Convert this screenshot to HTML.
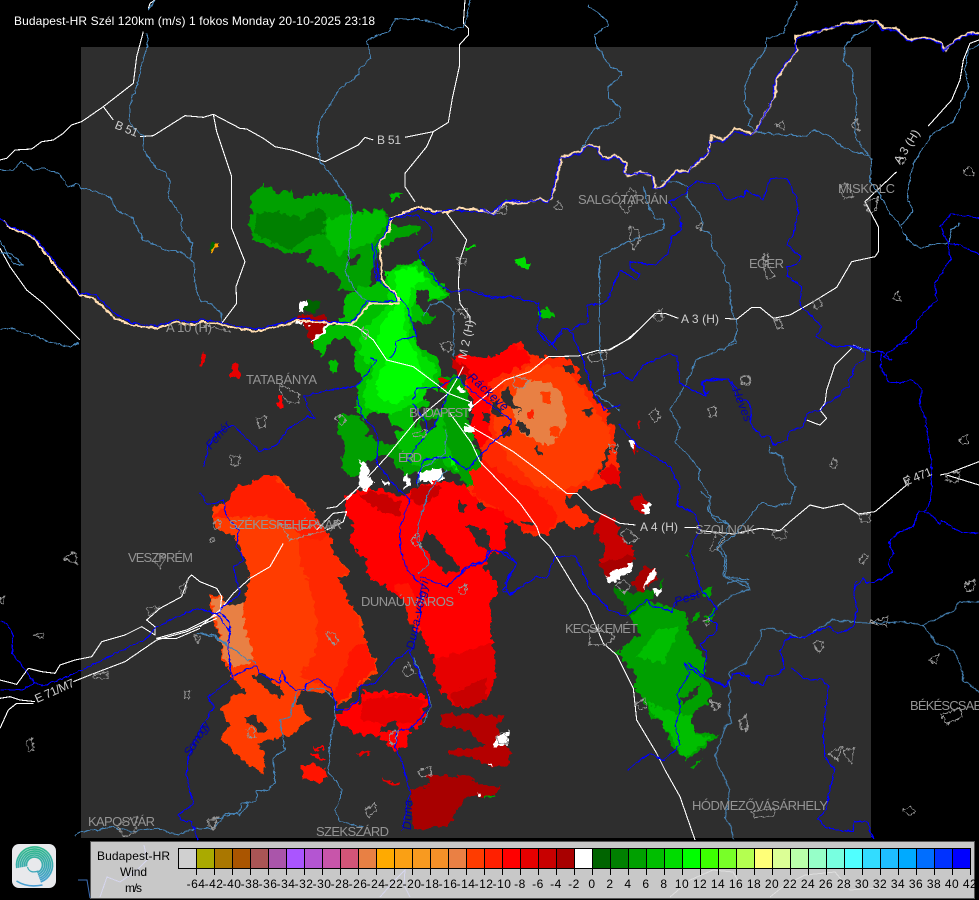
<!DOCTYPE html>
<html><head><meta charset="utf-8"><style>
html,body{margin:0;padding:0;background:#000}
svg{display:block;font-family:"Liberation Sans",sans-serif}
svg *{vector-effect:non-scaling-stroke}
.w,.s,.b,.g,.y{fill:none;stroke-linejoin:round}
.w{stroke:#fff;stroke-width:1.1}
.s{stroke:#4682b4;stroke-width:1.1}
.b{stroke:#0000ff;stroke-width:1.1}
.g{stroke:#959595;stroke-width:1}
.y{stroke:#ffdcb0;stroke-width:2}
.c{fill:#949494;font-size:13px}
.r{fill:#cfcfcf;font-size:12px}
.v{fill:#0000a8;font-size:12px;font-style:italic}
.l{fill:#000;font-size:12px;letter-spacing:.5px;text-anchor:middle}
</style></head><body>
<svg width="979" height="900" viewBox="0 0 979 900" xmlns="http://www.w3.org/2000/svg">
<defs>
<filter id="jr" filterUnits="userSpaceOnUse" x="0" y="0" width="979" height="900" color-interpolation-filters="sRGB">
<feTurbulence type="fractalNoise" baseFrequency=".16" numOctaves="2" seed="4" result="n"/>
<feDisplacementMap in="SourceGraphic" in2="n" scale="9" xChannelSelector="R" yChannelSelector="G"/>
</filter>
<filter id="jl" filterUnits="userSpaceOnUse" x="0" y="0" width="979" height="900" color-interpolation-filters="sRGB">
<feTurbulence type="fractalNoise" baseFrequency=".18" numOctaves="2" seed="9" result="n"/>
<feDisplacementMap in="SourceGraphic" in2="n" scale="4" xChannelSelector="R" yChannelSelector="G"/>
</filter>
<filter id="jc" filterUnits="userSpaceOnUse" x="0" y="0" width="979" height="900" color-interpolation-filters="sRGB">
<feTurbulence type="fractalNoise" baseFrequency=".3" numOctaves="2" seed="2" result="n"/>
<feDisplacementMap in="SourceGraphic" in2="n" scale="5" xChannelSelector="R" yChannelSelector="G"/>
</filter>
<linearGradient id="lg" gradientUnits="userSpaceOnUse" x1="30" y1="848" x2="34" y2="884"><stop offset="0" stop-color="#2fb78c"/><stop offset="1" stop-color="#4a9fd6"/></linearGradient>
</defs>
<rect width="979" height="900" fill="#000"/>
<rect x="81" y="47" width="790" height="791" fill="#2e2e2e"/>

<g filter="url(#jr)">
<!-- RADAR: north-west green (zoom3 space) -->
<g transform="translate(200,170) scale(.33333)" shape-rendering="crispEdges">
<polygon fill="#00a000" points="150,80 190,45 235,70 275,65 285,85 350,70 410,75 445,90 460,130 550,115 565,145 590,170 660,170 655,190 590,205 560,225 530,250 520,290 510,350 475,355 445,360 420,355 420,320 380,300 320,275 335,240 265,250 205,225 160,210 145,165 155,125"/>
<polygon fill="#008000" points="170,130 220,125 310,145 345,115 380,130 370,190 330,200 270,240 210,215 160,190"/>
<polygon fill="#00be00" points="380,150 460,130 550,120 560,150 540,190 510,220 440,240 410,255 380,200"/>
<polygon fill="#2e2e2e" points="445,265 475,255 478,275 450,288"/>
<polygon fill="#00be00" points="550,330 590,290 640,280 655,260 680,285 720,340 750,370 745,385 700,390 670,395 645,360 640,385 660,410 680,435 710,440 680,465 640,450 640,480 650,530 680,545 720,570 725,620 715,650 700,690 680,710 640,720 640,770 610,780 570,760 560,735 515,725 490,750 470,720 470,650 490,620 455,590 470,540 440,500 400,510 385,530 365,560 340,520 370,470 400,465 430,440 435,380 475,350 510,350"/>
<polygon fill="#00e000" points="560,310 640,285 700,340 740,375 690,385 650,370 630,440 630,490 670,560 710,590 690,680 620,710 570,740 500,710 490,660 520,600 480,550 480,500 510,460 570,400"/>
<polygon fill="#00ff00" points="590,305 640,290 680,330 640,345 620,400 610,470 650,560 680,620 650,670 580,700 530,680 530,620 560,570 530,520 540,470 590,400"/>
<polygon fill="#00a000" points="415,735 470,730 510,780 500,800 540,810 570,830 640,770 700,700 750,630 775,680 780,720 820,780 820,870 840,930 845,970 810,965 775,915 730,895 700,900 640,905 620,920 590,885 560,850 500,870 470,920 430,910 425,870 440,830 415,790"/>
<polygon fill="#00be00" points="580,790 640,770 690,760 740,710 760,760 790,820 800,890 770,905 720,870 660,890 620,870 600,840"/>
<polygon fill="#00ff00" points="745,860 790,845 785,905 760,890"/>
<polygon fill="#2e2e2e" points="645,360 680,358 685,395 650,398"/>
<polygon fill="#2e2e2e" points="505,730 545,728 560,760 555,785 520,770"/>
<polygon fill="#2e2e2e" points="680,655 710,660 700,700 670,700"/>
<polygon fill="#00be00" points="385,570 410,565 415,590 400,610 388,600"/>
<polygon fill="#00c000" points="565,75 605,65 605,85 575,92"/>
<polygon fill="#00dc00" points="800,230 830,225 815,238 802,240"/>
<polygon fill="#00a000" points="660,440 710,435 690,462 665,462"/>
<polygon fill="#00e000" points="945,270 960,268 960,285 948,285"/>
<!-- gyor piece -->
<polygon fill="#006400" points="320,395 360,395 365,415 340,430 315,420"/>
<polygon fill="#fff" points="295,390 320,390 315,430 295,425"/>
<polygon fill="#a80000" points="298,438 355,435 392,450 350,500 340,525 330,515 315,465 285,455"/>
<polygon fill="#fff" points="395,450 405,452 345,515 332,518"/>
<polygon fill="#fff" points="290,455 385,452 385,458 290,462"/>
<!-- small reds -->
<polygon fill="#e60000" points="90,610 100,580 120,580 118,625 90,622"/>
<polygon fill="#ff0000" points="235,675 250,672 252,715 232,715"/>
<polygon fill="#e60000" points="0,590 12,545 20,550 5,595"/>
<polygon fill="#006400" points="25,228 40,212 50,222 35,245"/>
<polygon fill="#ffa000" points="32,243 52,218 56,220 38,246"/>
</g>

<!-- RADAR: big left orange + centre red (zoom4 space) -->
<g transform="translate(200,460) scale(.33333)" shape-rendering="crispEdges">
<polygon fill="#ff3c00" points="100,85 210,45 245,60 280,100 320,130 340,160 390,230 385,250 410,290 445,330 440,350 415,350 455,440 485,480 500,550 530,610 530,640 500,660 470,680 455,710 410,740 400,700 360,695 320,690 300,700 290,720 340,770 300,800 270,830 240,830 200,840 175,850 200,910 190,940 130,900 60,835 90,800 60,745 100,710 140,700 90,640 70,600 65,550 30,440 30,410 60,410 85,435 130,430 155,350 130,290 105,230 40,200 40,140 80,130"/>
<polygon fill="#ff2800" points="290,180 340,160 390,230 410,290 445,340 415,350 455,440 500,550 530,620 470,680 410,735 400,695 300,650 350,570 350,450 300,300"/>
<polygon fill="#ff1e00" points="100,85 210,45 280,100 330,150 390,230 330,240 280,210 200,170 100,170 40,175 80,130"/>
<polygon fill="#ff1400" points="455,560 500,550 530,620 470,680 410,735 400,695 430,640"/>
<polygon fill="#e88044" points="30,415 60,415 85,435 130,430 130,490 165,600 100,625 75,600 60,520"/>
<polygon fill="#2e2e2e" points="160,650 185,635 250,690 240,715 210,695"/>
<polygon fill="#2e2e2e" points="310,725 330,745 358,785 345,785 305,750"/>
<polygon fill="#2e2e2e" points="130,770 165,765 200,805 190,820 150,795"/>
<polygon fill="#ff0000" points="440,105 470,100 490,80 550,90 610,110 640,90 700,60 770,70 830,90 840,150 920,130 960,140 960,200 915,200 915,270 880,280 850,320 890,370 895,400 870,420 880,550 890,640 860,720 820,740 760,740 710,670 700,590 660,520 650,500 625,480 615,430 580,395 510,355 495,300 450,250 460,200 440,160"/>
<polygon fill="#ff1400" points="580,370 630,370 650,430 660,520 625,480 615,430"/>
<polygon fill="#c80000" points="480,110 520,90 600,130 605,170 550,160"/>
<polygon fill="#c80000" points="630,90 700,70 730,90 680,130 640,135"/>
<polygon fill="#e60000" points="700,600 880,550 890,640 860,720 820,740 760,740 710,670"/>
<polygon fill="#c80000" points="750,700 860,650 860,720 820,740 765,738"/>
<polygon fill="#2e2e2e" points="800,195 860,210 880,280 840,260"/>
<polygon fill="#2e2e2e" points="680,210 720,250 785,330 740,340 690,290 660,250"/>
<polygon fill="#2e2e2e" points="915,190 960,185 960,235 925,250"/>
<polygon fill="#ff0000" points="405,770 480,720 490,695 560,695 675,705 680,740 660,800 630,810 620,860 580,870 540,830 470,820 420,800"/>
<polygon fill="#e60000" points="490,720 620,705 670,720 660,790 610,790 540,790 480,780"/>
<polygon fill="#2e2e2e" points="540,800 590,780 590,810 565,815 540,815"/>
<polygon fill="#2e2e2e" points="455,708 480,700 485,725 465,730"/>
<polygon fill="#b40000" points="720,770 750,760 915,770 890,800 930,880 930,915 870,920 800,890 745,885 745,870 860,860 820,830 810,810 720,800"/>
<polygon fill="#a80000" points="680,945 820,950 825,970 900,980 885,1005 800,1010 740,1100 640,1110 630,990 690,975"/>
<polygon fill="#ff1400" points="300,920 340,910 385,930 385,955 350,970 310,950"/>
<polygon fill="#ff0000" points="335,855 375,870 370,875 340,862"/>
<polygon fill="#ff0000" points="330,875 380,895 375,900 330,885"/>
<polygon fill="#e60000" points="545,958 600,968 595,977 548,966"/>
<polygon fill="#e60000" points="470,878 510,878 508,888 480,885"/>
<!-- green lower tail over red + white speckle -->
<polygon fill="#00a000" points="765,0 830,0 845,60 845,100 810,95 780,50"/>
<polygon fill="#fff" points="830,60 845,70 843,100 832,100"/>
<polygon fill="#fff" points="480,5 505,10 505,45 520,65 500,90 470,75"/>
<polygon fill="#fff" points="650,35 725,25 730,55 700,65 660,65"/>
<polygon fill="#fff" points="620,35 635,70 610,90"/>
<polygon fill="#fff" points="545,50 565,75 555,80"/>
<polygon fill="#fff" points="880,830 925,815 925,855 880,858"/>
<polygon fill="#fff" points="865,912 882,912 882,916 865,916"/>
<polygon fill="#fff" points="830,1000 840,1000 840,1006 830,1006"/>
<polygon fill="#00a000" points="850,1007 882,1007 882,1011 850,1011"/>
</g>

<!-- RADAR: east red disc, SE tail (zoom5 space) -->
<g transform="translate(450,330) scale(.33333)" shape-rendering="crispEdges">
<polygon fill="#ff2800" points="190,40 220,50 235,70 280,80 350,85 390,120 385,150 420,180 440,215 470,240 500,300 495,360 515,470 470,460 440,480 400,470 360,500 380,530 430,570 370,600 340,570 290,610 250,620 215,600 200,570 150,540 100,530 75,500 50,470 95,465 85,430 60,420 100,390 90,350 60,300 70,220 50,170 45,130 10,80 50,70 80,85 150,75 190,65"/>
<polygon fill="#ff3c00" points="160,150 240,110 340,110 390,170 430,230 480,300 480,370 430,440 350,480 260,470 180,390 130,310 140,220"/>
<polygon fill="#ff0000" points="190,40 220,50 235,70 240,100 160,130 100,165 45,135 10,80 50,70 80,85 150,75"/>
<polygon fill="#ff0000" points="45,135 120,160 120,320 90,350 60,300 70,220"/>
<polygon fill="#ff1400" points="60,420 100,390 170,440 260,480 330,560 290,610 215,600 150,540 75,500"/>
<polygon fill="#e88044" points="190,190 240,150 300,160 340,200 345,290 300,350 250,330 210,300 190,240"/>
<polygon fill="#ff3c00" points="270,180 300,180 300,220 275,215"/>
<polygon fill="#ff2000" points="235,245 250,245 250,265 235,265"/>
<polygon fill="#ff3c00" points="300,290 330,290 325,320 300,320"/>
<polygon fill="#e60000" points="445,440 480,400 510,430 515,470 470,460"/>
<polygon fill="#2e2e2e" points="160,190 175,175 210,250 190,235"/>
<polygon fill="#2e2e2e" points="120,210 140,220 165,260 130,255"/>
<polygon fill="#2e2e2e" points="210,270 240,300 230,310 195,290"/>
<polygon fill="#2e2e2e" points="255,345 280,380 265,380 250,355"/>
<polygon fill="#2e2e2e" points="395,240 430,235 425,265 405,255"/>
<polygon fill="#2e2e2e" points="470,260 500,240 490,280 475,290"/>
<polygon fill="#2e2e2e" points="445,440 460,400 470,350 490,345 460,420"/>
<polygon fill="#2e2e2e" points="340,105 370,110 375,130 340,125"/>
<polygon fill="#2e2e2e" points="340,505 370,500 380,525 355,540"/>
<polygon fill="#2e2e2e" points="100,250 118,255 118,275 100,272"/>
<polygon fill="#2e2e2e" points="160,290 185,300 180,325 160,315"/>
<polygon fill="#2e2e2e" points="25,515 50,525 45,550 22,545"/>
<polygon fill="#2e2e2e" points="210,570 250,575 240,590"/>
<polygon fill="#c80000" points="450,555 495,565 510,620 555,660 550,680 460,725 450,690 470,650 430,600"/>
<polygon fill="#fff" points="465,740 550,695 552,715 490,762"/>
<polygon fill="#a80000" points="445,700 550,675 550,695 465,740"/>
<polygon fill="#a80000" points="545,760 580,715 620,715 620,750 570,790"/>
<polygon fill="#fff" points="590,740 615,712 620,735 575,785"/>
<polygon fill="#c80000" points="535,515 570,495 600,520 600,555 570,555"/>
<polygon fill="#fff" points="580,520 600,520 600,555 580,555"/>
<polygon fill="#fff" points="535,325 558,340 558,365 535,340"/>
<polygon fill="#c80000" points="549,345 558,345 558,368 549,362"/>
<polygon fill="#e60000" points="565,275 575,275 572,292 566,292"/>
<!-- SE green -->
<polygon fill="#008000" points="490,770 540,790 620,780 640,740 640,770 600,810 540,860 520,820 490,790"/>
<polygon fill="#fff" points="612,778 632,775 622,800"/>
<polygon fill="#00a000" points="500,965 570,915 540,860 595,815 660,830 700,845 715,870 710,910 770,990 760,1040 790,1090 760,1130 740,1140 720,1165 740,1210 805,1215 760,1255 710,1290 660,1240 640,1180 600,1160 580,1110 555,1075 560,1040 530,1000"/>
<polygon fill="#00be00" points="590,1120 720,1160 740,1215 790,1225 700,1285 650,1200"/>
<polygon fill="#00be00" points="560,980 620,900 690,890 640,1000"/>
<polygon fill="#2e2e2e" points="690,1110 750,1060 740,1090 700,1125"/>
<polygon fill="#00a000" points="750,790 790,765 780,800 760,800"/>
<polygon fill="#00a000" points="720,870 755,840 740,870"/>
<polygon fill="#00a000" points="770,860 805,830 785,870 765,880"/>
<polygon fill="#00a000" points="705,680 720,662 712,682"/>
<polygon fill="#00a000" points="720,1310 760,1285 730,1320"/>
</g>

<!-- small greens zoom7 -->
<g transform="translate(480,0) scale(.33333)" shape-rendering="crispEdges">
<polygon fill="#00dc00" points="105,785 130,772 153,790 145,807 115,797"/>
<polygon fill="#00be00" points="175,930 205,925 225,955 190,957"/>
<polygon fill="#00e000" points="75,600 105,603 80,608"/>
<polygon fill="#ff1000" points="100,1030 130,1025 135,1050 110,1050"/>
</g>

<!-- Budapest mixed zone (zoom11 space) -->
<g transform="translate(400,360) scale(.33333)" shape-rendering="crispEdges">
<polygon fill="#00a000" points="120,50 170,45 205,90 205,170 190,200 240,290 240,320 220,335 190,335 160,290 140,250 130,170 120,110"/>
<polygon fill="#e60000" points="120,55 150,55 145,75 125,85"/>
<polygon fill="#fff" points="205,130 215,130 215,150 205,150"/>
<polygon fill="#2e2e2e" points="105,95 140,100 130,145 90,140"/>
<polygon fill="#2e2e2e" points="60,180 110,175 105,210 65,210"/>
<polygon fill="#c80000" points="150,0 200,10 210,50 170,40"/>
<polygon fill="#fff" points="190,205 220,200 225,215 195,220"/>
<polygon fill="#2e2e2e" points="305,100 330,90 350,150 320,140"/>
<polygon fill="#fff" points="175,80 195,90 190,100 172,95"/>
</g>
</g>

<!-- WHITE ROADS -->
<g transform="scale(.33333)" shape-rendering="crispEdges">
<polyline class="w" points="0,480 20,475 45,450 95,447 125,425 160,420 190,400 215,375 245,365 310,320 400,250 410,170 430,95"/>
<polyline class="w" points="445,25 450,10 465,0"/>
<polyline class="w" points="310,320 340,360"/>
<polyline class="w" points="420,410 460,407 555,347 610,352 640,343 720,385 740,387 790,415 825,440 875,450 975,485 1075,435 1095,412 1120,420"/>
<polyline class="w" points="1215,412 1300,395 1345,367 1357,295 1378,200 1378,135 1405,105 1405,85 1390,70 1395,0"/>
<polyline class="w" points="640,343 650,395 695,530 695,685 735,785 708,860 710,910 665,970"/>
<polyline class="w" points="1300,395 1280,440 1215,520 1215,560 1245,605"/>
<polyline class="w" points="0,745 30,800 80,870 130,910 240,1020"/>
</g>
<g transform="translate(200,170) scale(.33333)" shape-rendering="crispEdges">
<polyline class="w" points="740,130 800,210 780,270 775,340 780,400 810,440 810,460"/>
<polyline class="w" points="400,455 470,470 520,510 560,570 640,590 720,650 745,670 810,695"/>
<polyline class="w" points="745,670 650,750 560,860 440,990"/>
<polyline class="w" points="745,670 775,620 790,590"/>
</g>
<g transform="translate(200,460) scale(.33333)" shape-rendering="crispEdges">
<polyline class="w" points="490,70 410,140 380,145"/>
<polyline class="w" points="250,250 210,320 150,355 100,400 60,450 0,500"/>
<polyline class="w" points="350,210 400,160 440,155 430,185 380,210"/>
</g>
<g transform="translate(0,500) scale(.33333)" shape-rendering="crispEdges">
<polyline class="w" stroke-width="1.6" points="650,355 560,395 470,420 375,485 270,525 220,545"/>
<polyline class="w" points="650,345 560,390 470,415 530,415 600,385"/>
<polyline class="w" points="100,610 50,610 25,630 0,685"/>
<polyline class="w" points="0,595 30,590 60,600 105,605"/>
<polyline class="w" points="0,540 50,553 85,505 125,515 165,520 180,495 225,480 275,470 305,425 375,405 425,380 465,405 465,380 440,360 480,325 545,290 565,235 575,225 600,245 650,265 665,290 660,335"/>
</g>
<g transform="translate(450,330) scale(.33333)" shape-rendering="crispEdges">
<polyline class="w" points="60,235 165,150 240,125 295,80 385,78 440,62 480,60 530,30 565,0"/>
<polyline class="w" points="45,280 140,335 190,365 270,425 350,490 380,490 430,540 510,580 557,585"/>
<polyline class="w" points="703,592 745,592"/>
<polyline class="w" points="0,250 65,340 90,395 210,520 260,590 270,620 300,650 385,790 410,825 460,940 500,975 550,1075 560,1170 620,1270 645,1320"/>
<polyline class="w" points="645,1320 690,1400 735,1530"/>
</g>
<g transform="translate(480,0) scale(.33333)" shape-rendering="crispEdges">
<polyline class="w" points="385,1050 450,1015 525,940 555,940 595,955"/>
<polyline class="w" points="735,955 770,958 815,922 840,922 880,955 930,945 1000,905 1070,862 1115,785 1185,770 1195,755 1195,680 1155,605 1250,515"/>
<polyline class="w" points="1345,378 1415,300 1440,240 1450,180 1470,130 1497,120"/>
</g>
<g transform="translate(700,340) scale(.33333)" shape-rendering="crispEdges">
<polyline class="w" points="455,25 405,75 380,150 375,190 360,210 380,235 360,255 345,250 320,240"/>
<polyline class="w" points="460,15 495,30"/>
<polyline class="w" points="0,572 100,582 180,565 240,572 270,545 330,495 370,505 430,492 475,522 525,515 620,435"/>
<polyline class="w" points="720,405 745,400 837,365"/>
<polyline class="w" points="740,405 837,435"/>
</g>

<g filter="url(#jl)">
<!-- STEEL RIVERS -->
<g transform="scale(.33333)" shape-rendering="crispEdges">
<polyline class="s" points="465,0 445,30"/>
<polyline class="s" points="440,100 445,115 425,200 410,260 390,310 390,370 430,410 430,450 470,505 495,515 510,545 505,590 545,650 545,690 578,730 570,775 582,790 585,860 600,900 630,910 665,940 665,970"/>
<polyline class="s" points="1410,0 1400,55 1390,80 1360,90 1290,65 1235,55 1185,60 1165,95 1120,110 1100,125 1110,175 1075,210 1075,225 1020,265 960,360 950,420 960,485 1000,530 1050,605 1055,630 1045,780 1035,810 1065,875 1110,910"/>
<polyline class="s" points="0,510 40,510 65,485 100,510 130,505 175,520 205,560 230,550 245,565 270,570 330,590 350,630 395,650 430,720 480,740 490,750 540,755 570,775"/>
<polyline class="s" points="0,990 30,985 80,1000 150,1025 210,1040 235,1030"/>
<polyline class="s" points="0,720 40,790 70,795 30,760 0,760"/>
</g>
<g transform="translate(480,0) scale(.33333)" shape-rendering="crispEdges">
<polyline class="s" points="325,15 380,60 385,75 345,105 345,130 390,200 425,215 425,225 385,260 385,290 420,325 420,350 395,370 345,385 300,450"/>
<polyline class="s" points="950,0 950,15 925,60 910,100 860,115 855,150 810,215 795,265 795,310 815,350 805,375 825,395 855,400 930,405 970,410 1000,392 1050,408 1085,440 1170,470"/>
<polyline class="s" points="1190,60 1160,90 1125,105 1095,140 1090,185 1115,205 1120,270 1130,300 1125,410 1175,480 1170,545 1200,585 1230,640 1260,675 1280,715 1320,745 1370,730 1405,730 1415,690 1440,670"/>
<polyline class="s" points="1497,135 1465,150 1455,210 1465,260 1440,320 1420,365 1360,400 1335,435 1300,490 1285,560 1285,600 1300,635 1265,675"/>
<polyline class="s" points="545,545 590,545 625,560 620,590 650,630 665,650 665,690 695,705 695,740 735,795 730,825 750,860 755,930 770,975 770,1010 730,1050"/>
<polyline class="s" points="490,560 510,630 525,655 550,660 550,690 500,705 420,735 360,770 358,860 358,1050"/>
</g>
<g transform="translate(450,330) scale(.33333)" shape-rendering="crispEdges">
<polyline class="s" points="450,0 450,60 460,110 465,170 430,190 510,240"/>
<polyline class="s" points="860,0 855,40 740,90 700,175 660,240 690,290 675,340 720,380 750,420 745,440 780,500 780,550 835,580 830,610 805,640 830,680 825,740 900,750"/>
</g>
<g transform="translate(200,170) scale(.33333)" shape-rendering="crispEdges">
<polyline class="s" points="670,440 690,405 730,395 760,425 760,490 760,560"/>
<polyline class="s" points="740,780 735,850 660,900 655,950"/>
</g>
<g transform="translate(200,460) scale(.33333)" shape-rendering="crispEdges">
<polyline class="s" points="740,30 690,90 660,170 650,240 690,310 655,340"/>
<polyline class="s" points="640,590 680,690 695,740 670,790"/>
<polyline class="s" points="0,520 40,525 90,560 130,590 170,610"/>
<polyline class="s" points="290,700 300,690 370,685 405,720 405,775 390,850 385,935 425,985 420,1020 405,1050 420,1085 490,1100"/>
<polyline class="s" points="290,700 270,770 240,780 255,870 220,890 225,970 205,990 170,990 170,1025 125,1030 115,1060 50,1075"/>
</g>
<g transform="translate(0,500) scale(.33333)" shape-rendering="crispEdges">
<polyline class="s" points="590,400 640,410 680,435"/>
<polyline class="s" points="225,1010 240,995 300,990 330,980 390,995 470,985 535,1005 590,985 640,985 680,940 720,945 750,905"/>
</g>
<g transform="translate(700,340) scale(.33333)" shape-rendering="crispEdges">
<polyline class="s" points="210,315 208,340 245,345 260,410 285,440 270,490 220,500 185,485 150,530 110,580 50,625 75,655 70,710 110,725 150,745"/>
<polyline class="s" points="515,35 500,30 445,20"/>
<polyline class="s" points="0,455 25,475 25,515 50,545 85,550"/>
</g>
<g transform="translate(680,580) scale(.33333)" shape-rendering="crispEdges">
<polyline class="s" points="897,65 835,65 825,90 730,135 670,125 570,130 455,120 395,160 370,175 320,160 275,145 245,150 240,180 195,250 150,275 150,330 145,400 155,430 135,440 105,530 130,590 150,630 135,715 155,745 160,780"/>
<polyline class="s" points="730,135 770,190 825,215 845,265 850,300 897,335"/>
<polyline class="s" points="110,80 160,45 195,30 210,30 205,10 175,0 140,10"/>
</g>

<!-- BLUE RIVERS -->
<g transform="translate(200,170) scale(.33333)" shape-rendering="crispEdges">
<polyline class="b" points="570,145 650,135 695,170 695,210 655,245 660,265 720,345 755,365 800,360 860,380 960,380"/>
<polyline class="b" points="515,220 530,330 590,375 620,405 630,440 650,500 590,510 585,550 570,560"/>
<polyline class="b" points="510,565 530,570 470,650 380,660 315,680 320,710 345,745 325,740 270,770 230,825 180,845 135,800 100,765 50,790 25,830 10,890"/>
<polyline class="b" points="470,680 490,745 520,770 535,810 530,880 600,965"/>
<polyline class="b" points="640,690 650,655 720,650 770,620 800,650 850,690 935,750 925,780 880,815 800,900 750,860 670,870 650,940"/>
<polyline class="b" points="640,700 680,760 680,790 620,870 635,880"/>
<polyline class="b" points="745,670 700,770 680,790"/>
</g>
<g transform="translate(200,460) scale(.33333)" shape-rendering="crispEdges">
<polyline class="b" points="0,100 20,130 40,130 70,120 80,170 115,210 110,260 130,300 100,320 120,400 60,450"/>
<polyline class="b" points="0,445 40,460 60,455 90,490 85,560 95,650 170,615 175,640 240,670 245,630 255,660 285,690 315,690 320,670 355,655 395,690 410,750 440,750 475,720 480,680 525,670 590,595 630,570"/>
<polyline class="b" points="600,90 630,120 600,200 600,260 620,330 665,375 660,470 640,560 630,580 680,690 690,740 640,800 590,815 585,860 610,920 630,1000 605,1110"/>
<polyline class="b" points="660,350 740,380 800,320 850,310 865,275 890,270 950,310 910,390 930,405 960,385"/>
</g>
<g transform="translate(0,500) scale(.33333)" shape-rendering="crispEdges">
<polyline class="b" points="0,365 20,370 40,405 35,460 60,490 105,550 125,555 165,545 290,490 370,450 440,415 470,380 480,375 590,325 650,340 690,395 690,430"/>
<polyline class="b" points="0,570 65,570 105,550"/>
<polyline class="b" points="690,500 700,535 660,565 625,590 640,620 600,690 565,770 560,830 580,910 535,945 545,960 575,965 595,1020"/>
</g>
<g transform="translate(480,0) scale(.33333)" shape-rendering="crispEdges">
<polyline class="b" points="565,605 620,580 625,560 650,545 710,555 740,600 790,590 800,570 850,600 870,535 920,535 945,585 955,630 945,690 920,735 965,770 950,795 920,800 925,830 965,860 960,915 1025,980 1010,1010 1060,1040 1130,1040 1165,1050"/>
<polyline class="b" points="565,605 600,645 605,690 575,710 565,760 525,795 450,785 450,805 480,825 470,840 420,810 380,905 340,915 320,915 325,965 300,975 275,990 250,985 215,1030 230,1050"/>
<polyline class="b" points="1240,1050 1310,985 1310,960 1370,900 1365,850 1410,780 1405,730 1380,680 1415,640 1497,655"/>
<polyline class="b" points="1405,730 1440,735 1497,765"/>
<polyline class="b" points="0,875 30,895 90,890 175,910 180,960 170,985 215,1030"/>
</g>
<g transform="translate(450,330) scale(.33333)" shape-rendering="crispEdges">
<polyline class="b" points="0,760 70,700 100,700 125,660 170,670 200,700 165,760 175,795 260,740 290,745 315,680 375,680 410,750 420,780 480,840 525,860 590,810 600,825 665,845 680,815 750,790"/>
<polyline class="b" points="505,285 560,345 660,410 690,470 680,525 735,550 750,600 720,660 750,770 800,835 775,870 800,880 800,900 750,945 770,965 760,1040 790,1050 830,1070 850,1030 900,1040"/>
<polyline class="b" points="755,1040 700,1000 720,1030 680,1095 695,1130 675,1190 690,1245 640,1290 600,1270 530,1320"/>
<polyline class="b" points="260,0 300,50 335,10"/>
<polyline class="b" points="360,0 400,90 430,190 465,240 510,225"/>
<polyline class="b" points="460,140 510,125 545,155 580,105 660,70 680,80 690,160 770,200 755,155 835,145 860,175"/>
</g>
<g transform="translate(700,340) scale(.33333)" shape-rendering="crispEdges">
<polyline class="b" points="365,0 400,18 450,18 495,35 495,60 465,75 460,100 445,120 450,140 425,150 420,170 380,190 360,210 320,220 315,245 300,265 270,270 260,300 220,315 210,290 185,290 150,250 155,205 140,180 115,180 85,115 40,115 5,130 15,165 30,155"/>
<polyline class="b" points="545,35 540,80 565,125 600,130 630,118 665,145 660,200 675,230 695,365 695,460 685,500 670,515 655,515 640,560 600,575 565,605 580,640 565,670 578,695 540,720 500,730 490,715 460,750"/>
<polyline class="b" points="670,515 695,525 720,555 725,540 775,575 837,580"/>
<polyline class="b" points="510,35 550,35 575,60 550,50 585,25 620,5"/>
</g>
<g transform="translate(680,580) scale(.33333)" shape-rendering="crispEdges">
<polyline class="b" points="530,0 520,30 530,90 520,140 475,160 445,140 395,160 370,175 330,170 300,210 315,265 290,285 260,290 250,315 215,305 190,280 160,280 135,320 80,295 25,250"/>
<polyline class="b" points="335,262 375,298 425,298 445,320 435,400 430,460 435,530 465,570 445,640 440,690 415,715 440,745 520,755 520,725 560,725 580,780"/>
</g>

<!-- BORDER (beige + blue) -->
<g shape-rendering="crispEdges">
<g transform="scale(.33333)">
<polyline class="y" points="10,660 30,685 65,695 100,715 160,790 200,840 240,885 280,895 345,955 395,975 470,985 530,965 570,975 610,965 770,995 870,970 890,960 990,970 1055,975 1110,910 1200,910"/>
<polyline class="b" stroke-width="1.2" points="0,655 30,680 65,690 100,708 160,780 205,835 240,880 285,885 350,945 395,968 470,978 530,958 570,968 610,958 770,988 870,962 890,953 990,965 1055,968 1100,905 1200,903"/>
</g>
<g transform="translate(200,170) scale(.33333)">
<polyline class="y" points="600,395 590,375 545,330 540,220 565,185 575,145 640,115 665,110 700,125 745,125 780,115 830,120 880,130 915,100 960,95"/>
<polyline class="b" points="595,395 585,372 538,335 525,230 558,190 568,150 640,122 665,118 700,132 745,118 780,122 830,127 880,123 915,93 960,90"/>
</g>
<g transform="translate(480,0) scale(.33333)">
<polyline class="y" points="0,630 40,640 75,610 135,610 180,595 200,605 215,595 235,520 245,470 300,455 320,435 355,440 365,470 385,475 405,465 440,490 435,520 445,530 480,515 520,530 525,565 545,560 590,510 625,515 640,500 685,460 695,405 730,420 765,385 815,400 825,395 885,290 890,235 950,150 945,110 980,100 1040,90 1090,70 1190,60 1210,85 1250,85 1285,120 1330,110 1380,125 1395,150 1425,120 1470,97 1497,100"/>
<polyline class="b" points="0,625 40,645 75,605 135,605 180,600 200,610 215,590 230,520 240,475 300,462 320,437 350,445 365,478 385,480 405,468 435,495 432,520 445,525 480,518 515,525 520,565 545,565 590,515 625,520 645,490 690,455 685,425 730,425 765,395 810,405 830,390 880,295 885,235 945,155 950,115 985,105 1040,85 1090,75 1190,65 1205,90 1250,92 1285,125 1330,115 1380,130 1390,152 1425,125 1470,100 1497,105"/>
</g>
</g>
</g>

<!-- CITY OUTLINES -->
<g filter="url(#jc)" fill="none" shape-rendering="crispEdges">
<g transform="translate(480,0) scale(.33333)">
<polygon class="g" points="520,950 545,925 545,940 550,960 530,965"/><polygon class="g" points="225,620 235,605 245,615 245,628 228,628"/>
<polygon class="g" points="995,905 1015,895 1028,915 1010,928"/><polygon class="g" points="880,960 900,958 908,985 890,985"/>
<polygon class="g" points="450,680 475,690 480,720 460,750 450,720"/><polygon class="g" points="420,620 450,565 470,580 440,640"/>
<polygon class="g" points="850,765 865,762 860,790 885,830 860,835 850,790"/><polygon class="g" points="885,375 910,365 915,390 900,380"/>
<polygon class="g" points="1080,560 1100,550 1120,590 1090,595"/><polygon class="g" points="1155,610 1195,590 1185,635 1165,640"/>
<polygon class="g" points="1115,375 1130,355 1138,390 1120,385"/><polygon class="g" points="1240,885 1255,875 1262,905 1240,898"/>
<polygon class="g" points="1450,510 1475,500 1480,525 1455,525"/><polygon class="g" points="1255,470 1280,480 1265,492"/>
<polygon class="g" points="648,680 665,670 665,690"/>
</g>
<g transform="translate(200,170) scale(.33333)">
<polygon class="g" points="235,640 250,650 295,670 298,697 265,697 240,665"/><polygon class="g" points="170,745 198,740 195,770 178,775"/>
<polygon class="g" points="90,858 120,860 115,888 95,885"/><polygon class="g" points="405,745 425,735 438,750 425,765"/>
<polygon class="g" points="770,265 800,265 795,285 775,280"/><polygon class="g" points="490,470 505,490 495,510 485,490"/>
<polygon class="g" points="720,520 755,515 755,545 730,540"/><polygon class="g" points="770,420 800,415 805,445"/>
<polygon class="g" points="880,130 920,105 920,130"/><polygon class="g" points="640,790 680,780 675,800 640,800"/>
<polygon class="g" points="10,465 90,485 30,470"/>
</g>
<g transform="translate(200,460) scale(.33333)">
<polygon class="g" points="40,190 60,180 62,200 45,208"/><polygon class="g" points="30,235 42,235 40,245 30,245"/>
<polygon class="g" points="380,515 400,520 418,545 405,555 385,535"/><polygon class="g" points="610,630 625,610 645,640 615,650"/>
<polygon class="g" points="635,235 655,220 665,260 640,255"/><polygon class="g" points="565,825 595,810 585,850 570,850"/>
<polygon class="g" points="655,935 690,920 695,945 665,950"/><polygon class="g" points="495,1050 525,1030 530,1050 505,1072"/>
<polygon class="g" points="775,385 800,375 795,402 780,402"/><polygon class="g" points="890,830 915,815 925,850 895,850"/>
<polygon class="g" points="140,810 160,800 165,830 145,832"/><polygon class="g" points="20,1080 55,1070 40,1105"/>
<polygon class="g" points="240,190 300,210 350,190 390,210 420,180 380,210 270,240"/>
</g>
<g transform="translate(450,330) scale(.33333)">
<polygon class="g" points="515,605 530,595 565,625 540,640 520,635"/><polygon class="g" points="500,765 520,750 540,770 520,790"/>
<polygon class="g" points="415,900 470,905 495,920 470,945 420,945"/><polygon class="g" points="560,1120 585,1105 590,1130 570,1140"/>
<polygon class="g" points="775,1110 810,1120 800,1145 785,1125"/><polygon class="g" points="600,255 615,238 632,258 615,278"/>
<polygon class="g" points="775,235 795,232 798,258 780,258"/><polygon class="g" points="415,75 470,65 470,90 420,95"/>
<polygon class="g" points="870,1170 890,1155 892,1205 870,1195"/><polygon class="g" points="195,140 235,150 220,175 190,170"/>
<polygon class="g" points="870,140 895,135 900,165 875,162"/><polygon class="g" points="475,345 505,345 495,372"/>
<polygon class="g" points="760,870 780,870 770,890"/>
</g>
<g transform="translate(0,500) scale(.33333)">
<polygon class="g" points="190,175 225,155 230,190"/><polygon class="g" points="470,160 495,170 480,205 465,190"/>
<polygon class="g" points="100,405 130,400 130,415"/><polygon class="g" points="555,575 570,575 565,595 555,592"/>
<polygon class="g" points="540,260 565,240 555,280 545,285"/><polygon class="g" points="440,325 475,320 450,350"/>
<polygon class="g" points="80,725 95,715 100,750 85,755"/><polygon class="g" points="620,970 655,950 640,990"/>
<polygon class="g" points="350,975 410,950 405,1000 370,1010"/><polygon class="g" points="580,405 600,410 595,430"/>
<polygon class="g" points="275,525 325,515 320,535 290,535"/><polygon class="g" points="0,295 12,290 12,312 2,310"/>
</g>
<g transform="translate(700,340) scale(.33333)">
<polygon class="g" points="120,115 145,105 155,125 135,135"/><polygon class="g" points="25,205 45,200 50,225 30,230"/>
<polygon class="g" points="390,380 400,355 415,365 405,385"/><polygon class="g" points="778,300 800,282 805,312 785,315"/>
<polygon class="g" points="475,525 510,522 510,545 485,545"/><polygon class="g" points="218,575 255,570 258,595 225,595"/>
<polygon class="g" points="475,665 490,645 505,645 490,670"/><polygon class="g" points="610,420 625,405 625,435"/>
<polygon class="g" points="740,400 780,395 775,428 740,420"/><polygon class="g" points="30,632 50,575 75,595 50,630"/>
<polygon class="g" points="795,735 825,720 820,750 800,750"/>
</g>
<g transform="translate(680,580) scale(.33333)">
<polygon class="g" points="402,185 428,185 425,218 410,215"/><polygon class="g" points="180,420 200,408 205,452 185,445"/>
<polygon class="g" points="445,520 488,500 470,540"/><polygon class="g" points="490,510 522,505 515,550 495,530"/>
<polygon class="g" points="748,240 775,222 770,255"/><polygon class="g" points="785,405 840,385 845,412 800,432"/>
<polygon class="g" points="668,690 690,680 708,695 690,705"/><polygon class="g" points="215,695 285,685 280,710 225,712"/>
<polygon class="g" points="90,365 125,375 105,392"/><polygon class="g" points="565,125 600,120 625,110 620,138"/>
<polygon class="g" points="855,10 885,0 880,32 860,32"/>
</g>
</g>

<!-- LABELS -->
<text class="c" x="246" y="384" textLength="71">TATABÁNYA</text>
<text class="c" x="578" y="204" textLength="90">SALGÓTARJÁN</text>
<text class="c" x="749" y="268" textLength="35">EGER</text>
<text class="c" x="838" y="193" textLength="57">MISKOLC</text>
<text class="c" x="409" y="417" textLength="61">BUDAPEST</text>
<text class="c" x="398" y="462" textLength="24">ÉRD</text>
<text class="c" x="229" y="529" textLength="113">SZÉKESFEHÉRVÁR</text>
<text class="c" x="128" y="562" textLength="65">VESZPRÉM</text>
<text class="c" x="361" y="606" textLength="93">DUNAÚJVÁROS</text>
<text class="c" x="565" y="633" textLength="73">KECSKEMÉT</text>
<text class="c" x="695" y="534" textLength="60">SZOLNOK</text>
<text class="c" x="692" y="810" textLength="136">HÓDMEZŐVÁSÁRHELY</text>
<text class="c" x="910" y="710" textLength="80">BÉKÉSCSABA</text>
<text class="c" x="88" y="826" textLength="67">KAPOSVÁR</text>
<text class="c" x="316" y="836" textLength="73">SZEKSZÁRD</text>

<text class="r" x="114" y="128" transform="rotate(22 114 128)" textLength="24">B 51</text>
<text class="r" x="377" y="144" textLength="24">B 51</text>
<text class="r" x="681" y="323" textLength="38">A 3 (H)</text>
<text class="r" x="900" y="165" transform="rotate(-58 900 165)" textLength="38">A 3 (H)</text>
<text class="r" x="640" y="531" textLength="38">A 4 (H)</text>
<text class="r" x="905" y="486" transform="rotate(-22 905 486)" textLength="30">E 471</text>
<text class="c" x="166" y="332" font-size="12" textLength="46">A 10 (H)</text>
<text class="r" x="466" y="360" transform="rotate(-78 466 360)" textLength="40">M 2 (H)</text>
<text class="r" x="37" y="703" transform="rotate(-24 37 703)" textLength="42">E 71/M7</text>

<text class="v" x="467" y="378" transform="rotate(42 467 378)" textLength="50">Ráckeve</text>
<text class="v" x="211" y="450" transform="rotate(-50 211 450)" textLength="32">Fehér</text>
<text class="v" x="190" y="757" transform="rotate(-58 190 757)" textLength="38">Somogy</text>
<text class="v" x="414" y="650" transform="rotate(-78 414 650)" textLength="70">Duna-völgyi</text>
<text class="v" x="411" y="830" transform="rotate(-88 411 830)" textLength="30">Duna</text>
<text class="v" x="732" y="390" transform="rotate(68 732 390)" textLength="35">Heves</text>
<text class="v" x="676" y="606" transform="rotate(-20 676 606)" textLength="26">Pest</text>

<text x="14" y="25" fill="#fff" font-size="12" textLength="361">Budapest-HR Szél 120km (m/s) 1 fokos Monday 20-10-2025 23:18</text>

<!-- LOGO -->
<rect x="12" y="844" width="44" height="44" rx="7" fill="#e8e9ec"/>
<g fill="none" stroke="url(#lg)" stroke-width="1.7" transform="translate(1.5,1)">
<path d="M25.1 865.4A8 8 0 1 1 35.7 871.5"/>
<path d="M23.2 865.7A10 10 0 1 1 36.4 873.4"/>
<path d="M21.2 866.1A12 12 0 1 1 37.1 875.3"/>
<path d="M19.2 866.4A14 14 0 1 1 37.8 877.2"/>
<path d="M17.2 866.8A16 16 0 1 1 38.5 879"/>
<path d="M15.3 867.1A18 18 0 1 1 39.2 880.9"/>
<path d="M26 866Q28 873 37 870" stroke-width="1.2"/>
<path d="M15 880Q26 887 41 884" stroke-width="1.6"/>
</g>

<!-- LEGEND -->
<rect x="90.5" y="841.5" width="884" height="57" fill="#c8c8c8" stroke="#555" stroke-width="1"/>
<g fill="none" stroke="#d6d6ee" stroke-width="1" shape-rendering="crispEdges">
<polyline points="100,897 107,877 120,882 137,870 147,860 144,845"/>
<polyline points="670,897 690,880 713,870 733,872 740,884" stroke="#dedede"/>
<polyline points="770,897 785,885 805,875 835,872 850,890 880,888" stroke="#dedede"/>
<polyline points="410,897 404,885 405,870 395,880 380,897"/>
</g>
<polyline points="78,880 87,880 90,898" fill="none" stroke="#3c6eb4"/>
<text x="97" y="860" font-size="12" fill="#000" textLength="73">Budapest-HR</text>
<text x="120" y="876" font-size="12" fill="#000" textLength="27">Wind</text>
<text x="125" y="892" font-size="12" fill="#000" textLength="17">m/s</text>
<g stroke="#000" stroke-width="1" shape-rendering="crispEdges">
<rect x="178.5" y="848.5" width="18" height="20" fill="#d0d0d0"/>
<rect x="196.5" y="848.5" width="18" height="20" fill="#aaaa00"/>
<rect x="214.5" y="848.5" width="18" height="20" fill="#aa7700"/>
<rect x="232.5" y="848.5" width="18" height="20" fill="#aa5500"/>
<rect x="250.5" y="848.5" width="18" height="20" fill="#aa5555"/>
<rect x="268.5" y="848.5" width="18" height="20" fill="#aa55aa"/>
<rect x="286.5" y="848.5" width="18" height="20" fill="#aa55ff"/>
<rect x="304.5" y="848.5" width="18" height="20" fill="#b455d2"/>
<rect x="322.5" y="848.5" width="18" height="20" fill="#c855aa"/>
<rect x="340.5" y="848.5" width="18" height="20" fill="#d25578"/>
<rect x="358.5" y="848.5" width="18" height="20" fill="#e88044"/>
<rect x="376.5" y="848.5" width="18" height="20" fill="#ffaa00"/>
<rect x="394.5" y="848.5" width="18" height="20" fill="#faa014"/>
<rect x="412.5" y="848.5" width="18" height="20" fill="#f89a20"/>
<rect x="430.5" y="848.5" width="18" height="20" fill="#f59028"/>
<rect x="448.5" y="848.5" width="18" height="20" fill="#ea8044"/>
<rect x="466.5" y="848.5" width="18" height="20" fill="#ff3c00"/>
<rect x="484.5" y="848.5" width="18" height="20" fill="#ff2000"/>
<rect x="502.5" y="848.5" width="18" height="20" fill="#ff0000"/>
<rect x="520.5" y="848.5" width="18" height="20" fill="#e60000"/>
<rect x="538.5" y="848.5" width="18" height="20" fill="#c80000"/>
<rect x="556.5" y="848.5" width="18" height="20" fill="#a80000"/>
<rect x="574.5" y="848.5" width="18" height="20" fill="#ffffff"/>
<rect x="592.5" y="848.5" width="18" height="20" fill="#006400"/>
<rect x="610.5" y="848.5" width="18" height="20" fill="#008000"/>
<rect x="628.5" y="848.5" width="18" height="20" fill="#00a000"/>
<rect x="646.5" y="848.5" width="18" height="20" fill="#00be00"/>
<rect x="664.5" y="848.5" width="18" height="20" fill="#00dc00"/>
<rect x="682.5" y="848.5" width="18" height="20" fill="#00ff00"/>
<rect x="700.5" y="848.5" width="18" height="20" fill="#3cff00"/>
<rect x="718.5" y="848.5" width="18" height="20" fill="#78ff28"/>
<rect x="736.5" y="848.5" width="18" height="20" fill="#b4ff50"/>
<rect x="754.5" y="848.5" width="18" height="20" fill="#ffff78"/>
<rect x="772.5" y="848.5" width="18" height="20" fill="#dcff96"/>
<rect x="790.5" y="848.5" width="18" height="20" fill="#b9ffaa"/>
<rect x="808.5" y="848.5" width="18" height="20" fill="#96ffc8"/>
<rect x="826.5" y="848.5" width="18" height="20" fill="#78ffe0"/>
<rect x="844.5" y="848.5" width="18" height="20" fill="#50ffff"/>
<rect x="862.5" y="848.5" width="18" height="20" fill="#32dcff"/>
<rect x="880.5" y="848.5" width="18" height="20" fill="#1ebeff"/>
<rect x="898.5" y="848.5" width="18" height="20" fill="#00aaff"/>
<rect x="916.5" y="848.5" width="18" height="20" fill="#006eff"/>
<rect x="934.5" y="848.5" width="18" height="20" fill="#0032ff"/>
<rect x="952.5" y="848.5" width="18" height="20" fill="#0000ff"/>
<path fill="none" d="M196.5 868v7M214.5 868v7M232.5 868v7M250.5 868v7M268.5 868v7M286.5 868v7M304.5 868v7M322.5 868v7M340.5 868v7M358.5 868v7M376.5 868v7M394.5 868v7M412.5 868v7M430.5 868v7M448.5 868v7M466.5 868v7M484.5 868v7M502.5 868v7M520.5 868v7M538.5 868v7M556.5 868v7M574.5 868v7M592.5 868v7M610.5 868v7M628.5 868v7M646.5 868v7M664.5 868v7M682.5 868v7M700.5 868v7M718.5 868v7M736.5 868v7M754.5 868v7M772.5 868v7M790.5 868v7M808.5 868v7M826.5 868v7M844.5 868v7M862.5 868v7M880.5 868v7M898.5 868v7M916.5 868v7M934.5 868v7M952.5 868v7M970.5 868v7"/>
</g>
<text class="l" x="196" y="888">-64</text><text class="l" x="214" y="888">-42</text><text class="l" x="232" y="888">-40</text><text class="l" x="250" y="888">-38</text><text class="l" x="268" y="888">-36</text><text class="l" x="286" y="888">-34</text><text class="l" x="304" y="888">-32</text><text class="l" x="322" y="888">-30</text><text class="l" x="340" y="888">-28</text><text class="l" x="358" y="888">-26</text><text class="l" x="376" y="888">-24</text><text class="l" x="394" y="888">-22</text><text class="l" x="412" y="888">-20</text><text class="l" x="430" y="888">-18</text><text class="l" x="448" y="888">-16</text><text class="l" x="466" y="888">-14</text><text class="l" x="484" y="888">-12</text><text class="l" x="502" y="888">-10</text><text class="l" x="520" y="888">-8</text><text class="l" x="538" y="888">-6</text><text class="l" x="556" y="888">-4</text><text class="l" x="574" y="888">-2</text><text class="l" x="592" y="888">0</text><text class="l" x="610" y="888">2</text><text class="l" x="628" y="888">4</text><text class="l" x="646" y="888">6</text><text class="l" x="664" y="888">8</text><text class="l" x="682" y="888">10</text><text class="l" x="700" y="888">12</text><text class="l" x="718" y="888">14</text><text class="l" x="736" y="888">16</text><text class="l" x="754" y="888">18</text><text class="l" x="772" y="888">20</text><text class="l" x="790" y="888">22</text><text class="l" x="808" y="888">24</text><text class="l" x="826" y="888">26</text><text class="l" x="844" y="888">28</text><text class="l" x="862" y="888">30</text><text class="l" x="880" y="888">32</text><text class="l" x="898" y="888">34</text><text class="l" x="916" y="888">36</text><text class="l" x="934" y="888">38</text><text class="l" x="952" y="888">40</text><text class="l" x="970" y="888">42</text>
</svg>
</body></html>
